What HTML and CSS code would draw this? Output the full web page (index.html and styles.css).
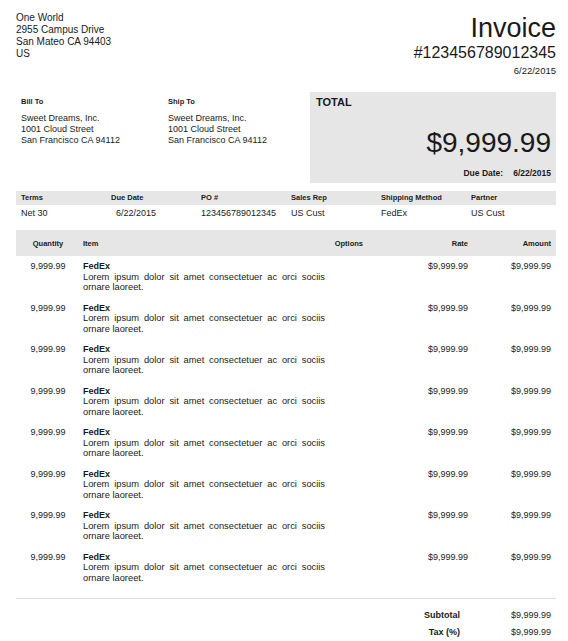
FILE: index.html
```html
<!DOCTYPE html>
<html>
<head>
<meta charset="utf-8">
<link rel="stylesheet" href="styles.css">
</head>
<body>
<div class="page">
  <header class="top">
    <div class="from">
      <div>One World</div>
      <div>2955 Campus Drive</div>
      <div>San Mateo CA 94403</div>
      <div>US</div>
    </div>
    <div class="title">
      <div class="inv">Invoice</div>
      <div class="num">#123456789012345</div>
      <div class="date">6/22/2015</div>
    </div>
  </header>

  <section class="mid">
    <div class="addr">
      <div class="label">Bill To</div>
      <div>Sweet Dreams, Inc.</div>
      <div>1001 Cloud Street</div>
      <div>San Francisco CA 94112</div>
    </div>
    <div class="addr">
      <div class="label">Ship To</div>
      <div>Sweet Dreams, Inc.</div>
      <div>1001 Cloud Street</div>
      <div>San Francisco CA 94112</div>
    </div>
    <div class="totalbox">
      <div class="tlabel">TOTAL</div>
      <div class="tamount">$9,999.99</div>
      <div class="tdue"><span>Due Date:</span><span>6/22/2015</span></div>
    </div>
  </section>

  <section class="terms">
    <div class="thead">
      <span>Terms</span><span>Due Date</span><span>PO #</span><span>Sales Rep</span><span>Shipping Method</span><span>Partner</span>
    </div>
    <div class="tvals">
      <span>Net 30</span><span class="shift">6/22/2015</span><span>123456789012345</span><span>US Cust</span><span>FedEx</span><span>US Cust</span>
    </div>
  </section>

  <table class="items">
    <colgroup>
      <col class="c-qty"><col class="c-item"><col class="c-opt"><col class="c-rate"><col class="c-amt">
    </colgroup>
    <thead>
      <tr><th class="qty">Quantity</th><th class="item">Item</th><th class="r">Options</th><th class="r">Rate</th><th class="r">Amount</th></tr>
    </thead>
    <tbody>
      <tr><td class="qty">9,999.99</td><td class="item"><b>FedEx</b><p>Lorem ipsum dolor sit amet consectetuer ac orci sociis ornare laoreet.</p></td><td></td><td class="r">$9,999.99</td><td class="r">$9,999.99</td></tr>
      <tr><td class="qty">9,999.99</td><td class="item"><b>FedEx</b><p>Lorem ipsum dolor sit amet consectetuer ac orci sociis ornare laoreet.</p></td><td></td><td class="r">$9,999.99</td><td class="r">$9,999.99</td></tr>
      <tr><td class="qty">9,999.99</td><td class="item"><b>FedEx</b><p>Lorem ipsum dolor sit amet consectetuer ac orci sociis ornare laoreet.</p></td><td></td><td class="r">$9,999.99</td><td class="r">$9,999.99</td></tr>
      <tr><td class="qty">9,999.99</td><td class="item"><b>FedEx</b><p>Lorem ipsum dolor sit amet consectetuer ac orci sociis ornare laoreet.</p></td><td></td><td class="r">$9,999.99</td><td class="r">$9,999.99</td></tr>
      <tr><td class="qty">9,999.99</td><td class="item"><b>FedEx</b><p>Lorem ipsum dolor sit amet consectetuer ac orci sociis ornare laoreet.</p></td><td></td><td class="r">$9,999.99</td><td class="r">$9,999.99</td></tr>
      <tr><td class="qty">9,999.99</td><td class="item"><b>FedEx</b><p>Lorem ipsum dolor sit amet consectetuer ac orci sociis ornare laoreet.</p></td><td></td><td class="r">$9,999.99</td><td class="r">$9,999.99</td></tr>
      <tr><td class="qty">9,999.99</td><td class="item"><b>FedEx</b><p>Lorem ipsum dolor sit amet consectetuer ac orci sociis ornare laoreet.</p></td><td></td><td class="r">$9,999.99</td><td class="r">$9,999.99</td></tr>
      <tr><td class="qty">9,999.99</td><td class="item"><b>FedEx</b><p>Lorem ipsum dolor sit amet consectetuer ac orci sociis ornare laoreet.</p></td><td></td><td class="r">$9,999.99</td><td class="r">$9,999.99</td></tr>
    </tbody>
  </table>

  <div class="sums">
    <div class="srow"><span class="slabel">Subtotal</span><span class="sval">$9,999.99</span></div>
    <div class="srow"><span class="slabel">Tax (%)</span><span class="sval">$9,999.99</span></div>
  </div>
</div>
</body>
</html>
```

FILE: styles.css
```css
* { box-sizing: border-box; }
html, body { margin: 0; padding: 0; background: #fff; }
body {
  font-family: "Liberation Sans", Arial, sans-serif;
  color: #1a1a1a;
}
.page {
  width: 568px;
  padding: 10px 12px 0 16px;
}

/* header */
.top {
  display: flex;
  justify-content: space-between;
  align-items: flex-start;
}
.from {
  font-size: 10px;
  line-height: 12px;
  padding-top: 2px;
}
.title { text-align: right; padding-top: 3px; }
.inv { font-size: 27px; line-height: 30px; }
.num { font-size: 16px; line-height: 20px; }
.date { font-size: 9.5px; line-height: 12px; margin-top: 2px; }

/* bill / ship / total */
.mid {
  display: flex;
  margin-top: 15px;
}
.addr {
  width: 147px;
  padding: 5px 0 0 5px;
  font-size: 9px;
  line-height: 11px;
}
.addr .label {
  font-size: 7.5px;
  font-weight: bold;
  line-height: 10px;
  margin-bottom: 6px;
}
.totalbox {
  margin-left: auto;
  width: 246px;
  height: 91px;
  background: #e6e6e6;
  padding: 4px 5px 0 6px;
  display: flex;
  flex-direction: column;
}
.tlabel { font-size: 11px; font-weight: bold; line-height: 12px; }
.tamount {
  font-size: 28px;
  line-height: 30px;
  text-align: right;
  margin-top: 20px;
}
.tdue {
  font-size: 8.5px;
  font-weight: bold;
  line-height: 10px;
  text-align: right;
  margin-top: 10px;
  display: flex;
  justify-content: flex-end;
  gap: 10px;
}

/* terms */
.terms { margin-top: 8px; }
.thead, .tvals {
  display: grid;
  grid-template-columns: repeat(6, 90px);
}
.thead {
  background: #e6e6e6;
  font-size: 7.5px;
  font-weight: bold;
  line-height: 14px;
}
.tvals {
  font-size: 9px;
  line-height: 16px;
}
.thead span, .tvals span { padding-left: 5px; }
.tvals .shift { padding-left: 10px; }

/* items */
.items {
  margin-top: 9px;
  width: 540px;
  border-collapse: collapse;
  table-layout: fixed;
}
.c-qty { width: 64px; }
.c-item { width: 248px; }
.c-opt { width: 40px; }
.c-rate { width: 105px; }
.c-amt { width: 83px; }
.items th {
  background: #e6e6e6;
  font-size: 7.5px;
  font-weight: bold;
  height: 26px;
  vertical-align: middle;
  text-align: left;
  padding: 0 5px;
}
.items td {
  font-size: 9px;
  line-height: 10.5px;
  vertical-align: top;
  padding: 5px 5px 5px 5px;
}
.items .qty { text-align: center; padding: 5px 0 5px 0; }
.items th.qty { padding: 0; }
.items .item { padding-left: 3px; padding-right: 3px; }
.items .r { text-align: right; }
.items td b { display: block; font-weight: bold; }
.items td p {
  margin: 0;
  font-size: 9.3px;
  text-align: justify;
}

/* totals */
.sums {
  margin-top: 10px;
  border-top: 1px solid #dcdcdc;
  width: 540px;
  padding-top: 8px;
}
.srow {
  display: flex;
  justify-content: flex-end;
  font-size: 9px;
  line-height: 17px;
}
.slabel { font-weight: bold; text-align: right; }
.sval { width: 96px; text-align: right; padding-right: 5px; }
```
